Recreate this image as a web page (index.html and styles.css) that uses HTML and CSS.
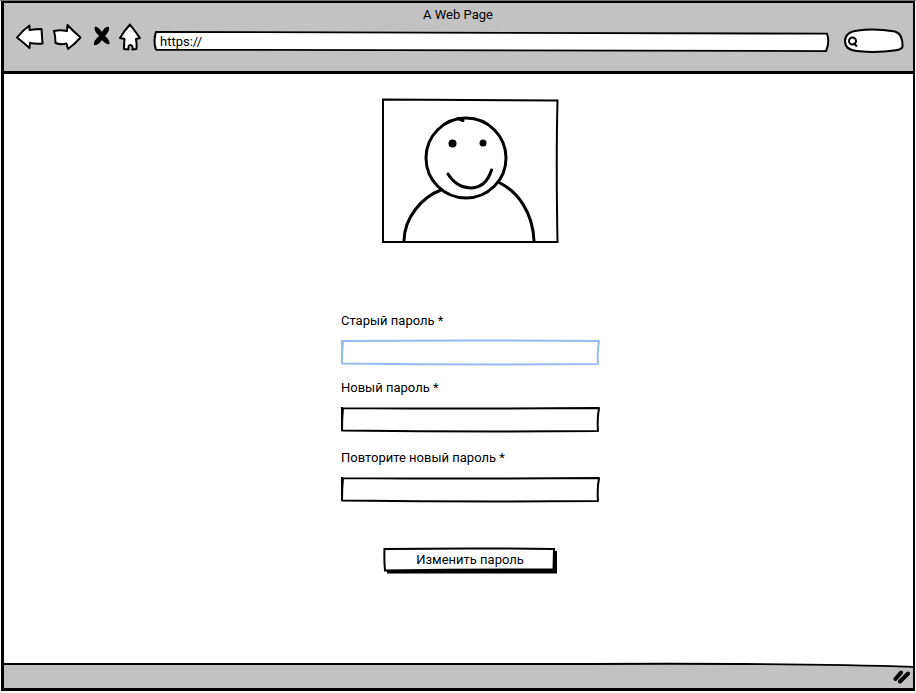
FILE: index.html
```
<!DOCTYPE html>
<html lang="ru">
<head>
<meta charset="utf-8">
<meta name="viewport" content="width=device-width, initial-scale=1">
<title>A Web Page</title>
<link rel="stylesheet" href="styles.css">
</head>
<body>
<div class="window">
  <header class="chrome">
    <div class="title">A Web Page</div>
    <div class="toolbar">
      <nav class="nav">
        <button class="tool" type="button" aria-label="Back">
          <svg class="ink" width="30" height="30" viewBox="0 0 30 30"><path class="paper" d="M2 14.500 Q8 7 14.500 2.500 L14.500 7 Q21 6 26.500 6 Q27 13 27.500 20.500 Q21 21 15 20 L14.500 25 Q9 20 2 14.500Z"/></svg>
        </button>
        <button class="tool" type="button" aria-label="Forward">
          <svg class="ink" width="30" height="30" viewBox="0 0 30 30"><path class="paper" d="M1 8 Q7 6.500 14 8 L14.500 2 Q20 8 27.500 14.500 Q22 21 15 26 L13.500 20.500 Q8 22 2.500 20 Q2.500 13 1 8Z"/></svg>
        </button>
        <button class="tool" type="button" aria-label="Stop">
          <svg class="ink" width="20" height="30" viewBox="0 0 20 30"><path class="blot" d="M4 3.500 Q8 4 11 9 Q14 3 18 4 Q19 8 14 13 Q19 17 18.500 21 Q15 22 11 17 Q7 23 3 22 Q2 18 8 13 Q2 7 4 3.500Z"/></svg>
        </button>
        <button class="tool" type="button" aria-label="Home">
          <svg class="ink" width="22" height="30" viewBox="0 0 22 30"><path class="paper" d="M11 1.500 Q16 8 21 15 L17 16 Q18 21 17.500 26 L13.500 26.500 Q14 22 11.500 22 Q9 22 9.500 26.500 L5 26 Q5 21 5.500 16 L1 15 Q5 8 11 1.500Z"/></svg>
        </button>
      </nav>
      <div class="address">
        <svg class="sketch" viewBox="0 0 676 24" preserveAspectRatio="none" aria-hidden="true"><path class="paper" d="M3 2 Q340 2.500 674 4 Q677 13 673 23 Q340 21.500 3 21.500 Q0 12 3 2Z"/></svg>
        <input class="entry" type="text" value="https://" aria-label="Address">
      </div>
      <div class="search">
        <svg class="sketch" viewBox="0 0 64 26" preserveAspectRatio="none" aria-hidden="true"><path class="paper" d="M4 13 Q4 4 17 2.500 Q33 0 54 3.500 Q62 6 61.500 19 Q60 22 53 22.500 Q36 25 16 23 Q4 22 4 13Z"/><circle class="line" cx="11.500" cy="13" r="3.500"/><path class="line" d="M12.500 15 L16 18.500"/></svg>
        <input class="entry" type="search" aria-label="Search">
      </div>
    </div>
  </header>

  <main class="page">
    <svg class="avatar" width="178" height="146" viewBox="0 0 178 146" role="img" aria-label="Аватар">
      <path class="box" d="M2 1.500 L176.500 2.500 Q175 60 176.500 144 L2 144Z"/>
      <ellipse class="curve" cx="85" cy="60" rx="40" ry="40"/>
      <path class="curve" d="M77 20.500 L82 22.500"/>
      <circle cx="71.500" cy="45.500" r="4"/>
      <circle cx="102" cy="45" r="3.500"/>
      <path class="curve" d="M67 76 Q75 89 89 90 Q105 90 110.500 72 M60 92 C41 99 23 120 23 143 M119 85 C137 94 152 115 153 143"/>
    </svg>

    <form class="form">
      <label class="label" for="old">Старый пароль *</label>
      <div class="field field-active">
        <svg class="sketch" viewBox="0 0 260 26" preserveAspectRatio="none" aria-hidden="true"><path class="line" d="M2 2 Q130 1 259 2 Q257 13 258 25 Q130 26 2 24.500 Q2 12 2 1 M3 2 Q2 12 2 25"/></svg>
        <input class="entry" id="old" type="password">
      </div>
      <label class="label" for="new">Новый пароль *</label>
      <div class="field">
        <svg class="sketch" viewBox="0 0 260 26" preserveAspectRatio="none" aria-hidden="true"><path class="line" d="M2 2 Q130 3 259 2 Q257 13 258 25 Q130 26 2 24.500 Q2 12 2 1 M3 2 Q2 12 2 25"/></svg>
        <input class="entry" id="new" type="password">
      </div>
      <label class="label label-last" for="repeat">Повторите новый пароль *</label>
      <div class="field">
        <svg class="sketch" viewBox="0 0 260 26" preserveAspectRatio="none" aria-hidden="true"><path class="line" d="M2 2 Q130 3 259 2 Q257 13 258 25 Q130 26 2 24.500 Q2 12 2 1 M3 2 Q2 12 2 25"/></svg>
        <input class="entry" id="repeat" type="password">
      </div>
      <button class="submit" type="submit">
        <svg class="sketch" viewBox="0 0 174 26" preserveAspectRatio="none" aria-hidden="true"><path d="M4 4 H174 V26.500 H4Z"/><path class="button-face" d="M1.500 2 Q85 1 171 2 L170.500 22.500 Q85 22 2 23.500 Q1 12 1.500 1"/></svg>
        <span class="submit-text">Изменить пароль</span>
      </button>
    </form>
  </main>

  <footer class="status">
    <svg class="sketch" viewBox="0 0 909 26" preserveAspectRatio="none" aria-hidden="true"><path class="sheet" d="M0 -3 H909 V4 Q800 0 580 1 Q300 0 0 1Z"/><path class="line" d="M0 1 Q300 0 580 1 Q800 0 909 4"/></svg>
    <svg class="grip" width="20" height="16" viewBox="0 0 20 16" aria-hidden="true"><path d="M2.500 11 L8 4.500 M7 13.500 L15 5.500"/></svg>
  </footer>
</div>
</body>
</html>
```
FILE: styles.css
```
* {
  box-sizing: border-box;
}

body {
  margin: 0;
  background: #fff;
  color: #000;
  font: 400 13px/20px Roboto, "Noto Sans", sans-serif;
}

.window {
  display: flex;
  flex-direction: column;
  min-height: 100vh;
  padding: 0 1px 2px;
  border-top: 1px solid #737873;
  background: #fff;
}

.chrome {
  padding: 2px 8px 0 11px;
  height: 73px;
  border: solid #000;
  border-width: 2px 2px 3px 3px;
  background: #c2c2c2;
}

.title {
  padding-right: 4px;
  text-align: center;
}

.toolbar {
  display: flex;
  align-items: flex-start;
  gap: 12px;
}

.nav {
  display: flex;
  gap: 8px;
  margin-top: -2px;
}

.tool {
  display: flex;
  padding: 0;
  border: 0;
  background: none;
}

.ink,
.sketch {
  overflow: visible;
}

.paper {
  fill: #fff;
  stroke: #000;
  stroke-width: 2px;
  stroke-linejoin: round;
}

.sheet {
  fill: #fff;
}

.line {
  fill: none;
  stroke: currentColor;
  stroke-width: 2px;
  stroke-linejoin: round;
}

.address,
.search,
.field,
.submit {
  position: relative;
}

.address {
  flex: 1;
  height: 22px;
  margin-top: 5px;
}

.search {
  width: 64px;
  height: 26px;
  margin-top: 3px;
}

.sketch {
  position: absolute;
  inset: 0;
  width: 100%;
  height: 100%;
}

.entry {
  position: relative;
  display: block;
  width: 100%;
  height: 100%;
  padding: 0 7px;
  border: 0;
  outline: 0;
  background: none;
  color: inherit;
  font: inherit;
}

.field .entry {
  color: #000;
}

.search .entry {
  padding-left: 20px;
  appearance: none;
}

.page {
  flex: 1;
  display: flex;
  flex-direction: column;
  align-items: center;
  padding: 24px 0 24px 23px;
  border: solid #000;
  border-width: 0 2px 0 3px;
}

.box {
  fill: #fff;
  stroke: #000;
  stroke-width: 2px;
}

.curve {
  fill: none;
  stroke: #000;
  stroke-width: 3px;
  stroke-linecap: round;
}

.form {
  display: flex;
  flex-direction: column;
  width: 260px;
  margin-top: 67px;
}

.label {
  margin-bottom: 8px;
  padding-left: 1px;
}

.field {
  height: 26px;
  margin-bottom: 13px;
}

.field-active {
  color: #95bbf2;
}

.label-last {
  margin-top: 3px;
}

.submit {
  align-self: center;
  width: 174px;
  height: 26px;
  margin-top: 32px;
  padding: 0;
  border: 0;
  background: none;
  color: inherit;
  font: inherit;
}

.submit-text {
  position: relative;
}

.button-face {
  fill: #fff;
  stroke: #000;
  stroke-width: 2px;
}

.status {
  position: relative;
  display: flex;
  align-items: center;
  justify-content: flex-end;
  height: 28px;
  margin-top: -1px;
  border: solid #000;
  border-width: 0 2px 3px 3px;
  background: #c2c2c2;
}

.grip {
  position: relative;
  fill: none;
  stroke: #000;
  stroke-width: 4px;
  stroke-linecap: round;
}
```
